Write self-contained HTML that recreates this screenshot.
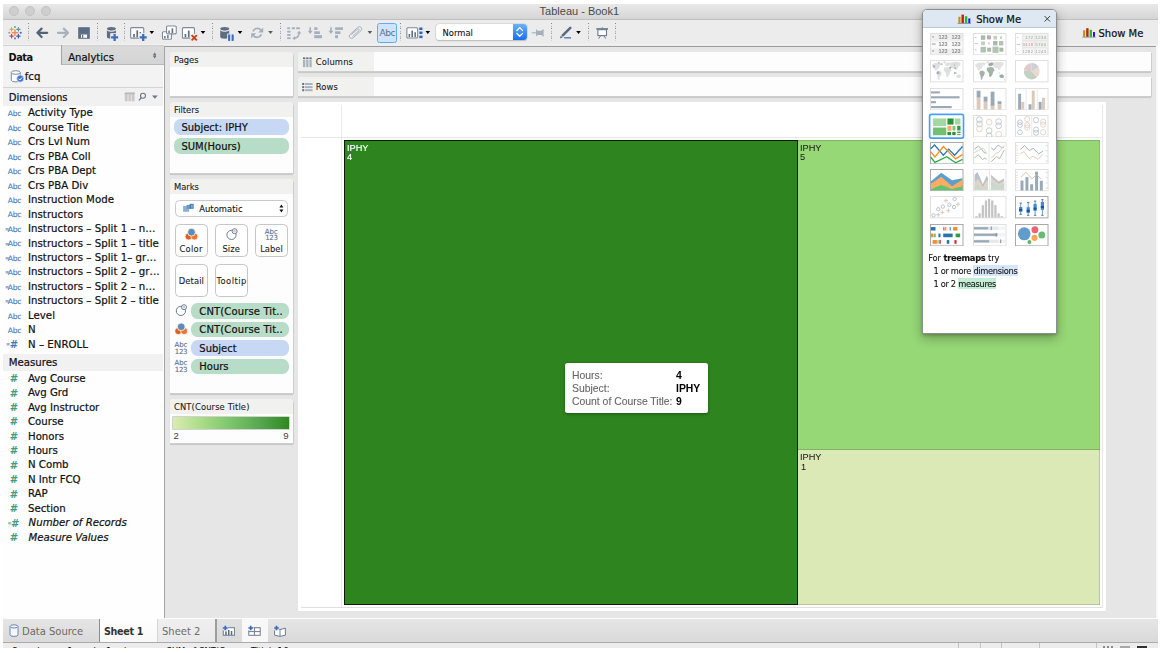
<!DOCTYPE html><html lang="en"><head><meta charset="utf-8"><title>Tableau - Book1</title><style>
*{box-sizing:border-box;margin:0;padding:0}
html,body{width:1162px;height:653px;overflow:hidden;background:#fff}
body{position:relative;font-family:"DejaVu Sans Condensed","DejaVu Sans","Liberation Sans",sans-serif;font-size:11.3px;color:#111}
.a{position:absolute}
.t{position:absolute;white-space:pre;line-height:1;-webkit-text-stroke:0.22px currentColor}
.ui{font-family:"DejaVu Sans Condensed","DejaVu Sans","Liberation Sans",sans-serif;font-stretch:condensed}
.ar{font-family:"Liberation Sans","DejaVu Sans",sans-serif}
.dj{font-family:"DejaVu Sans","Liberation Sans",sans-serif}
.n{-webkit-text-stroke:0}
.g{will-change:transform}
.s{-webkit-text-stroke:0.1px currentColor}
#win{left:3px;top:4px;width:1155px;height:644px;background:#e6e6e6;overflow:hidden}
#abs{left:-3px;top:-4px;width:1162px;height:653px}
.tl{width:10.4px;height:10.4px;border-radius:50%;background:#cecece;border:1px solid #c2c2c2}
.sep{width:1px;height:18px;top:23px;background-image:linear-gradient(#828282 1.1px,rgba(0,0,0,0) 1.1px,rgba(0,0,0,0) 2.45px,#aaa 2.45px,#aaa 3.5px,rgba(0,0,0,0) 3.5px);background-size:1px 4.9px}
.card{background:#fdfdfd;border-radius:4px 4px 0 0;box-shadow:1px 1px 0 #cdcdcd,0 1.6px 0.8px #c6c6c6}
.ch{position:absolute;left:0;top:0;right:0;background:#f1f1f0;border-radius:4px 4px 0 0}
.pill{border-radius:6.5px}
.blue{background:#c6d8f3}
.green{background:#b7ddc8}
.btn{background:#fff;border:1.5px solid #c6c6c6;border-radius:4.5px}
</style></head><body>
<div id="win" class="a"><div id="abs" class="a">
<div class="a" style="left:3.00px;top:4.00px;width:1155.00px;height:16.00px;background:linear-gradient(#e9e9e9,#d5d5d5);border-bottom:1px solid #c0c0c0"></div>
<div class="a tl" style="left:8.90px;top:5.70px;width:10.40px;height:10.40px;"></div>
<div class="a tl" style="left:24.90px;top:5.70px;width:10.40px;height:10.40px;"></div>
<div class="a tl" style="left:40.90px;top:5.70px;width:10.40px;height:10.40px;"></div>
<div class="t ar n" style="left:539.60px;top:6px;font-size:11px;color:#4a4a4a;">Tableau - Book1</div>
<div class="a" style="left:3.00px;top:20.00px;width:1155.00px;height:26.00px;background:#ececec"></div>
<div class="a" style="left:3.00px;top:44.20px;width:1155.00px;height:1.00px;background:#f1f1f1"></div>
<div class="a" style="left:3.00px;top:45.20px;width:58.50px;height:1.30px;background:#d3d3d3"></div>
<div class="a" style="left:163.40px;top:46.00px;width:995.00px;height:1.00px;background:#9c9c9c"></div>
<div class="a sep" style="left:27.80px;top:23.20px;width:1.00px;height:18.00px;"></div>
<div class="a sep" style="left:96.70px;top:23.20px;width:1.00px;height:18.00px;"></div>
<div class="a sep" style="left:123.90px;top:23.20px;width:1.00px;height:18.00px;"></div>
<div class="a sep" style="left:212.20px;top:23.20px;width:1.00px;height:18.00px;"></div>
<div class="a sep" style="left:279.60px;top:23.20px;width:1.00px;height:18.00px;"></div>
<div class="a sep" style="left:400.00px;top:23.20px;width:1.00px;height:18.00px;"></div>
<div class="a sep" style="left:550.70px;top:23.20px;width:1.00px;height:18.00px;"></div>
<div class="a sep" style="left:587.50px;top:23.20px;width:1.00px;height:18.00px;"></div>
<div class="a sep" style="left:614.90px;top:23.20px;width:1.00px;height:18.00px;"></div>
<svg class="a" style="left:0;top:0;overflow:visible" width="1162" height="653" viewBox="0 0 1162 653">
<path d="M12.40 32.70h5.20M15.00 30.10v5.20" stroke="#ef8f57" stroke-width="1.50" stroke-linecap="round" fill="none"/>
<path d="M9.90 29.30h3.40M11.60 27.60v3.40" stroke="#f0a146" stroke-width="1.20" stroke-linecap="round" fill="none"/>
<path d="M16.70 29.30h3.40M18.40 27.60v3.40" stroke="#5b98a6" stroke-width="1.20" stroke-linecap="round" fill="none"/>
<path d="M9.90 36.10h3.40M11.60 34.40v3.40" stroke="#d93a5e" stroke-width="1.20" stroke-linecap="round" fill="none"/>
<path d="M16.70 36.10h3.40M18.40 34.40v3.40" stroke="#3a5d9f" stroke-width="1.20" stroke-linecap="round" fill="none"/>
<circle cx="15.00" cy="27.00" r="1.05" fill="#6aa1a8"/>
<circle cx="9.30" cy="32.70" r="1.05" fill="#80abb2"/>
<circle cx="20.70" cy="32.70" r="1.05" fill="#5761a3"/>
<circle cx="15.00" cy="38.40" r="1.05" fill="#7a83bb"/>
<path d="M47.2 32.8H38.2M41.6 28.6L37.4 32.8L41.6 37" fill="none" stroke="#526277" stroke-width="2.2" stroke-linecap="round" stroke-linejoin="round"/>
<path d="M58 32.8H67M63.8 28.6L68 32.8L63.8 37" fill="none" stroke="#a9b1bd" stroke-width="2.2" stroke-linecap="round" stroke-linejoin="round"/>
<rect x="78.2" y="27.2" width="11.6" height="11.6" fill="#5c6c83"/><rect x="81" y="34.5" width="6.1" height="3.3" fill="#fff"/><rect x="82" y="35" width="1.3" height="2.8" fill="#5c6c83"/><rect x="78.2" y="33.6" width="11.6" height="0.6" fill="#7a889b"/>
<path d="M106.90 29.80v7.00a4.50 1.90 0 0 0 9.00 0v-7.00a4.50 1.71 0 0 1 -9.00 0z" fill="#5e6d81"/><ellipse cx="111.40" cy="28.80" rx="4.50" ry="1.90" fill="#5e6d81"/><path d="M106.90 29.40a4.50 1.90 0 0 0 9.00 0" fill="none" stroke="#eef0f2" stroke-width="0.7"/>
<path d="M110.2 33.2h8.6v8.4h-8.6z" fill="#ececec"/>
<path d="M113.45 33.90h2.30v2.35h2.35v2.30h-2.35v2.35h-2.30v-2.35h-2.35v-2.30h2.35z" fill="#3d6cc0"/>
<rect x="130.65" y="27.65" width="13.10" height="10.50" rx="1" fill="#fff" stroke="#7d8a9b" stroke-width="1.10"/><rect x="133.20" y="34.00" width="1.70" height="3.30" fill="#5e6d81"/><rect x="136.40" y="30.40" width="1.70" height="6.90" fill="#5e6d81"/><rect x="139.60" y="32.00" width="1.50" height="5.30" fill="#5e6d81"/>
<path d="M138.8 33.2h8.6v8.4h-8.6z" fill="#ececec"/>
<path d="M142.05 33.90h2.30v2.35h2.35v2.30h-2.35v2.35h-2.30v-2.35h-2.35v-2.30h2.35z" fill="#3d6cc0"/>
<path d="M149.50 31.10h4.60l-2.30 2.90z" fill="#000"/>
<rect x="162.45" y="31.75" width="9.00" height="7.50" rx="1" fill="#fff" stroke="#7d8a9b" stroke-width="1.10"/><rect x="164.20" y="36.00" width="1.40" height="2.40" fill="#5e6d81"/><rect x="167.20" y="35.00" width="1.40" height="3.40" fill="#5e6d81"/>
<rect x="166.55" y="25.95" width="9.70" height="7.90" rx="1" fill="#fff" stroke="#7d8a9b" stroke-width="1.10"/><rect x="168.40" y="30.50" width="1.40" height="2.50" fill="#5e6d81"/><rect x="171.60" y="28.40" width="1.60" height="4.60" fill="#5e6d81"/>
<rect x="182.45" y="27.65" width="12.00" height="10.50" rx="1" fill="#fff" stroke="#7d8a9b" stroke-width="1.10"/><rect x="184.60" y="34.00" width="1.70" height="3.30" fill="#5e6d81"/><rect x="187.90" y="30.60" width="1.70" height="6.70" fill="#5e6d81"/>
<path d="M190.2 33.8h8v8h-8z" fill="#ececec"/>
<path d="M191.6 35.2l5.2 5.2M196.8 35.2l-5.2 5.2" stroke="#c6401c" stroke-width="1.9" fill="none"/>
<path d="M200.70 31.10h4.60l-2.30 2.90z" fill="#000"/>
<path d="M220.20 29.80v7.00a4.50 1.90 0 0 0 9.00 0v-7.00a4.50 1.71 0 0 1 -9.00 0z" fill="#5e6d81"/><ellipse cx="224.70" cy="28.80" rx="4.50" ry="1.90" fill="#5e6d81"/><path d="M220.20 29.40a4.50 1.90 0 0 0 9.00 0" fill="none" stroke="#eef0f2" stroke-width="0.7"/>
<path d="M227.2 33.6h7.4v8h-7.4z" fill="#ececec"/>
<rect x="228.1" y="34.5" width="2.1" height="6.4" fill="#3a6cc1"/><rect x="231.6" y="34.5" width="2.1" height="6.4" fill="#3a6cc1"/>
<path d="M237.70 31.10h4.60l-2.30 2.90z" fill="#000"/>
<path d="M253 31.4A4.7 4.7 0 0 1 261 30.2" fill="none" stroke="#a5afbc" stroke-width="1.7"/><path d="M263.2 27.6v5h-5z" fill="#a5afbc"/>
<path d="M261.4 34.4A4.7 4.7 0 0 1 253.4 35.6" fill="none" stroke="#a5afbc" stroke-width="1.7"/><path d="M251.2 38.2v-5h5z" fill="#a5afbc"/>
<path d="M268.20 31.10h4.60l-2.30 2.90z" fill="#5a5a5a"/>
<rect x="287.20" y="27.3" width="2.70" height="1.9" fill="#a5afbc"/>
<rect x="291.80" y="27.3" width="3.20" height="1.9" fill="#a5afbc"/>
<rect x="296.20" y="27.3" width="3.70" height="1.9" fill="#a5afbc"/>
<rect x="287.2" y="30.80" width="3.4" height="1.8" fill="#a5afbc"/>
<rect x="287.2" y="34.10" width="3.4" height="1.8" fill="#a5afbc"/>
<rect x="287.2" y="37.30" width="3.4" height="1.8" fill="#a5afbc"/>
<path d="M294 38.2Q299 37.6 299.2 32.6" fill="none" stroke="#a5afbc" stroke-width="1.5"/><path d="M296.8 33.4l2.4-2.6 2.2 2.8z" fill="#a5afbc"/><path d="M295 36.2l-2.7 2.1 2.9 2z" fill="#a5afbc"/>
<path d="M310.20 27.3v4.2" stroke="#a5afbc" stroke-width="1.6" fill="none"/><path d="M307.70 30.8h5l-2.5 3.2z" fill="#a5afbc"/><rect x="314.20" y="27.30" width="3.30" height="2.60" fill="#a5afbc"/><rect x="314.20" y="31.30" width="5.70" height="2.70" fill="#a5afbc"/><rect x="314.20" y="35.20" width="7.80" height="3.00" fill="#a5afbc"/>
<path d="M331.00 27.3v4.2" stroke="#a5afbc" stroke-width="1.6" fill="none"/><path d="M328.50 30.8h5l-2.5 3.2z" fill="#a5afbc"/><rect x="335.10" y="27.30" width="7.90" height="2.60" fill="#a5afbc"/><rect x="335.10" y="31.30" width="5.30" height="2.70" fill="#a5afbc"/><rect x="335.10" y="35.20" width="2.90" height="3.00" fill="#a5afbc"/>
<g transform="translate(355.5 32.6) rotate(-42)"><rect x="-7.6" y="-2.3" width="15.2" height="4.6" rx="2.3" fill="none" stroke="#a5afbc" stroke-width="0.9"/><path d="M-4.6 0.9h8.6a1.2 1.2 0 0 0 0-2.2h-8.2" fill="none" stroke="#a5afbc" stroke-width="0.9"/></g>
<path d="M367.60 31.10h4.60l-2.30 2.90z" fill="#5a5a5a"/>
<rect x="406.85" y="27.75" width="10.80" height="10.20" rx="1" fill="#fff" stroke="#7d8a9b" stroke-width="1.10"/><rect x="408.60" y="34.00" width="1.50" height="3.10" fill="#5e6d81"/><rect x="411.40" y="30.60" width="1.60" height="6.50" fill="#5e6d81"/><rect x="414.40" y="32.20" width="1.50" height="4.90" fill="#5e6d81"/>
<rect x="419.3" y="27.50" width="3.2" height="2.5" fill="#3565b8"/>
<rect x="419.3" y="31.50" width="3.2" height="2.5" fill="#3565b8"/>
<rect x="419.3" y="35.60" width="3.2" height="2.5" fill="#3565b8"/>
<path d="M425.50 31.10h4.60l-2.30 2.90z" fill="#000"/>
<path d="M531.8 32.8h4.6" stroke="#a5afbc" stroke-width="1.1" fill="none"/><path d="M536 29v7.6l1.6-1.6h3.6l2.4 1.8V28.9l-2.4 1.8h-3.6z" fill="#a5afbc"/>
<path d="M562.8 35.4L570.3 27.9" stroke="#5a6a80" stroke-width="2.6" stroke-linecap="round" fill="none"/><path d="M559.8 38.4l1-2.6 1.8 1.8z" fill="#5a6a80"/><path d="M564.2 37.8h6.8" stroke="#4a70c2" stroke-width="1.3" fill="none"/>
<path d="M576.20 31.10h4.60l-2.30 2.90z" fill="#000"/>
<rect x="596.3" y="28.1" width="11.7" height="1.6" fill="#6b7b90"/><rect x="597.9" y="29.7" width="8.6" height="5.9" fill="#fff" stroke="#6b7b90" stroke-width="1.1"/><path d="M600.4 36l-1.8 2.6M604 36l1.8 2.6M602.2 27.2v1" stroke="#6b7b90" stroke-width="1" fill="none"/>
<rect x="1083.10" y="30.30" width="2.10" height="6.60" fill="#cf8a08"/><rect x="1086.20" y="28.20" width="2.40" height="8.70" fill="#b8240a"/><rect x="1089.60" y="29.80" width="2.40" height="7.10" fill="#1fbf2a"/><rect x="1093.00" y="32.00" width="2.00" height="4.90" fill="#2a12f5"/><path d="M1082.30 37.20h13.40" stroke="#6a7f9c" stroke-width="0.7" fill="none"/>
</svg>
<div class="a" style="left:377.40px;top:23.10px;width:19.60px;height:19.60px;background:#cfe4fa;border:1.3px solid #5eacf6;border-radius:2.5px"></div>
<div class="t dj n" style="left:379.40px;top:29px;font-size:9.1px;color:#5f7189;letter-spacing:-0.4px">Abc</div>
<div class="a" style="left:435.80px;top:24.40px;width:91.00px;height:15.80px;background:#fff;border-radius:3.5px;box-shadow:0 0 0 0.6px #cfcfcf,0 0.8px 1px rgba(0,0,0,.28);overflow:hidden"><div class="a" style="right:0;top:0;width:13.6px;height:100%;background:linear-gradient(#6db2f9,#1b6df1)"></div></div>
<div class="t ui s" style="left:442.60px;top:28px;font-size:9.3px;color:#111;">Normal</div>
<svg class="a" style="left:0;top:0;overflow:visible" width="1162" height="653" viewBox="0 0 1162 653"><path d="M516.9 30.5l2.8-2.9 2.8 2.9M516.9 33.4l2.8 2.9 2.8-2.9" fill="none" stroke="#fff" stroke-width="1.25" stroke-linecap="round" stroke-linejoin="round"/></svg>
<div class="t ui" style="left:1098.50px;top:28px;font-size:11.1px;color:#111;">Show Me</div>
<div class="a" style="left:3.00px;top:46.00px;width:161.00px;height:571.60px;background:#fefefe"></div>
<div class="a" style="left:3.00px;top:46.00px;width:160.40px;height:41.40px;background:#f3f3f3"></div>
<div class="a" style="left:61.00px;top:45.20px;width:102.90px;height:19.60px;background:linear-gradient(#cfcfcf,#dadada 12%,#d4d4d4);border-left:1.1px solid #a4a4a4;border-bottom:1px solid #b9b9b9"></div>
<div class="t ui n" style="left:8.40px;top:53px;font-size:10.9px;color:#111;font-weight:bold;letter-spacing:-0.4px">Data</div>
<div class="t ui" style="left:68.20px;top:52px;font-size:11.2px;color:#111;">Analytics</div>
<div class="a" style="left:3.00px;top:87.00px;width:160.40px;height:1.00px;background:#d3d3d3"></div>
<div class="t ui" style="left:24.80px;top:71px;font-size:11.3px;color:#111;">fcq</div>
<div class="a" style="left:3.00px;top:88.00px;width:160.40px;height:17.80px;background:#f1f1f1"></div>
<div class="t ui" style="left:8.80px;top:92px;font-size:11.2px;color:#111;">Dimensions</div>
<div class="t dj s" style="left:7.80px;top:110px;font-size:7.6px;color:#4b76bb;letter-spacing:-0.3px">Abc</div>
<div class="t ui" style="left:28.00px;top:107px;font-size:11.3px;color:#111;letter-spacing:0.04px">Activity Type</div>
<div class="t dj s" style="left:7.80px;top:125px;font-size:7.6px;color:#4b76bb;letter-spacing:-0.3px">Abc</div>
<div class="t ui" style="left:28.00px;top:122px;font-size:11.3px;color:#111;letter-spacing:0.04px">Course Title</div>
<div class="t dj s" style="left:7.80px;top:139px;font-size:7.6px;color:#4b76bb;letter-spacing:-0.3px">Abc</div>
<div class="t ui" style="left:28.00px;top:136px;font-size:11.3px;color:#111;letter-spacing:0.04px">Crs Lvl Num</div>
<div class="t dj s" style="left:7.80px;top:154px;font-size:7.6px;color:#4b76bb;letter-spacing:-0.3px">Abc</div>
<div class="t ui" style="left:28.00px;top:151px;font-size:11.3px;color:#111;letter-spacing:0.04px">Crs PBA Coll</div>
<div class="t dj s" style="left:7.80px;top:168px;font-size:7.6px;color:#4b76bb;letter-spacing:-0.3px">Abc</div>
<div class="t ui" style="left:28.00px;top:165px;font-size:11.3px;color:#111;letter-spacing:0.04px">Crs PBA Dept</div>
<div class="t dj s" style="left:7.80px;top:183px;font-size:7.6px;color:#4b76bb;letter-spacing:-0.3px">Abc</div>
<div class="t ui" style="left:28.00px;top:180px;font-size:11.3px;color:#111;letter-spacing:0.04px">Crs PBA Div</div>
<div class="t dj s" style="left:7.80px;top:197px;font-size:7.6px;color:#4b76bb;letter-spacing:-0.3px">Abc</div>
<div class="t ui" style="left:28.00px;top:194px;font-size:11.3px;color:#111;letter-spacing:0.04px">Instruction Mode</div>
<div class="t dj s" style="left:7.80px;top:211px;font-size:7.6px;color:#4b76bb;letter-spacing:-0.3px">Abc</div>
<div class="t ui" style="left:28.00px;top:209px;font-size:11.3px;color:#111;letter-spacing:0.04px">Instructors</div>
<div class="t dj n" style="left:5.00px;top:227px;font-size:5px;color:#4b76bb;font-weight:bold;">=</div>
<div class="t dj s" style="left:7.80px;top:226px;font-size:7.6px;color:#4b76bb;letter-spacing:-0.3px">Abc</div>
<div class="t ui" style="left:28.00px;top:223px;font-size:11.3px;color:#111;letter-spacing:0.04px">Instructors – Split 1 – n…</div>
<div class="t dj n" style="left:5.00px;top:242px;font-size:5px;color:#4b76bb;font-weight:bold;">=</div>
<div class="t dj s" style="left:7.80px;top:240px;font-size:7.6px;color:#4b76bb;letter-spacing:-0.3px">Abc</div>
<div class="t ui" style="left:28.00px;top:238px;font-size:11.3px;color:#111;letter-spacing:0.04px">Instructors – Split 1 – title</div>
<div class="t dj n" style="left:5.00px;top:256px;font-size:5px;color:#4b76bb;font-weight:bold;">=</div>
<div class="t dj s" style="left:7.80px;top:255px;font-size:7.6px;color:#4b76bb;letter-spacing:-0.3px">Abc</div>
<div class="t ui" style="left:28.00px;top:252px;font-size:11.3px;color:#111;letter-spacing:0.04px">Instructors – Split 1– gr…</div>
<div class="t dj n" style="left:5.00px;top:270px;font-size:5px;color:#4b76bb;font-weight:bold;">=</div>
<div class="t dj s" style="left:7.80px;top:269px;font-size:7.6px;color:#4b76bb;letter-spacing:-0.3px">Abc</div>
<div class="t ui" style="left:28.00px;top:266px;font-size:11.3px;color:#111;letter-spacing:0.04px">Instructors – Split 2 – gr…</div>
<div class="t dj n" style="left:5.00px;top:285px;font-size:5px;color:#4b76bb;font-weight:bold;">=</div>
<div class="t dj s" style="left:7.80px;top:284px;font-size:7.6px;color:#4b76bb;letter-spacing:-0.3px">Abc</div>
<div class="t ui" style="left:28.00px;top:281px;font-size:11.3px;color:#111;letter-spacing:0.04px">Instructors – Split 2 – n…</div>
<div class="t dj n" style="left:5.00px;top:299px;font-size:5px;color:#4b76bb;font-weight:bold;">=</div>
<div class="t dj s" style="left:7.80px;top:298px;font-size:7.6px;color:#4b76bb;letter-spacing:-0.3px">Abc</div>
<div class="t ui" style="left:28.00px;top:295px;font-size:11.3px;color:#111;letter-spacing:0.04px">Instructors – Split 2 – title</div>
<div class="t dj s" style="left:7.80px;top:313px;font-size:7.6px;color:#4b76bb;letter-spacing:-0.3px">Abc</div>
<div class="t ui" style="left:28.00px;top:310px;font-size:11.3px;color:#111;letter-spacing:0.04px">Level</div>
<div class="t dj s" style="left:7.80px;top:327px;font-size:7.6px;color:#4b76bb;letter-spacing:-0.3px">Abc</div>
<div class="t ui" style="left:28.00px;top:324px;font-size:11.3px;color:#111;letter-spacing:0.04px">N</div>
<div class="t dj n" style="left:6.00px;top:342px;font-size:5px;color:#4b76bb;font-weight:bold;">=</div>
<div class="t dj n" style="left:9.80px;top:340px;font-size:10px;color:#4b76bb;font-weight:bold;letter-spacing:0">#</div>
<div class="t ui" style="left:28.00px;top:339px;font-size:11.3px;color:#111;letter-spacing:0.04px">N – ENROLL</div>
<div class="a" style="left:3.00px;top:353.80px;width:160.40px;height:17.40px;background:#f1f1f1"></div>
<div class="t ui" style="left:8.80px;top:357px;font-size:11.3px;color:#111;">Measures</div>
<div class="t dj n" style="left:9.80px;top:374px;font-size:10px;color:#3f9c82;font-weight:bold;">#</div>
<div class="t ui" style="left:28.00px;top:373px;font-size:11.3px;color:#111;">Avg Course</div>
<div class="t dj n" style="left:9.80px;top:389px;font-size:10px;color:#3f9c82;font-weight:bold;">#</div>
<div class="t ui" style="left:28.00px;top:387px;font-size:11.3px;color:#111;">Avg Grd</div>
<div class="t dj n" style="left:9.80px;top:403px;font-size:10px;color:#3f9c82;font-weight:bold;">#</div>
<div class="t ui" style="left:28.00px;top:402px;font-size:11.3px;color:#111;">Avg Instructor</div>
<div class="t dj n" style="left:9.80px;top:417px;font-size:10px;color:#3f9c82;font-weight:bold;">#</div>
<div class="t ui" style="left:28.00px;top:416px;font-size:11.3px;color:#111;">Course</div>
<div class="t dj n" style="left:9.80px;top:432px;font-size:10px;color:#3f9c82;font-weight:bold;">#</div>
<div class="t ui" style="left:28.00px;top:431px;font-size:11.3px;color:#111;">Honors</div>
<div class="t dj n" style="left:9.80px;top:446px;font-size:10px;color:#3f9c82;font-weight:bold;">#</div>
<div class="t ui" style="left:28.00px;top:445px;font-size:11.3px;color:#111;">Hours</div>
<div class="t dj n" style="left:9.80px;top:461px;font-size:10px;color:#3f9c82;font-weight:bold;">#</div>
<div class="t ui" style="left:28.00px;top:459px;font-size:11.3px;color:#111;">N Comb</div>
<div class="t dj n" style="left:9.80px;top:475px;font-size:10px;color:#3f9c82;font-weight:bold;">#</div>
<div class="t ui" style="left:28.00px;top:474px;font-size:11.3px;color:#111;">N Intr FCQ</div>
<div class="t dj n" style="left:9.80px;top:490px;font-size:10px;color:#3f9c82;font-weight:bold;">#</div>
<div class="t ui" style="left:28.00px;top:488px;font-size:11.3px;color:#111;">RAP</div>
<div class="t dj n" style="left:9.80px;top:504px;font-size:10px;color:#3f9c82;font-weight:bold;">#</div>
<div class="t ui" style="left:28.00px;top:503px;font-size:11.3px;color:#111;">Section</div>
<div class="t dj n" style="left:7.60px;top:521px;font-size:5px;color:#3f9c82;font-weight:bold;">=</div>
<div class="t dj n" style="left:11.00px;top:519px;font-size:10px;color:#3f9c82;font-weight:bold;">#</div>
<div class="t ui" style="left:28.60px;top:517px;font-size:11.3px;color:#111;font-style:italic;">Number of Records</div>
<div class="t dj n" style="left:9.80px;top:533px;font-size:10px;color:#3f9c82;font-weight:bold;">#</div>
<div class="t ui" style="left:28.60px;top:532px;font-size:11.3px;color:#111;font-style:italic;">Measure Values</div>
<div class="a" style="left:163.90px;top:46.00px;width:1.30px;height:571.60px;background:#a4a4a4"></div>
<div class="a card" style="left:170.00px;top:52.40px;width:123.00px;height:43.60px;"><div class="ch" style="height:14.6px"></div></div>
<div class="t ui s" style="left:174.00px;top:55px;font-size:9.3px;color:#1c1c1c;letter-spacing:0px">Pages</div>
<div class="a card" style="left:170.00px;top:102.20px;width:123.00px;height:70.90px;"><div class="ch" style="height:14.6px"></div></div>
<div class="t ui s" style="left:174.00px;top:105px;font-size:9.3px;color:#1c1c1c;letter-spacing:0px">Filters</div>
<div class="a card" style="left:170.00px;top:179.40px;width:123.00px;height:213.40px;"><div class="ch" style="height:14.6px"></div></div>
<div class="t ui s" style="left:174.00px;top:182px;font-size:9.3px;color:#1c1c1c;letter-spacing:0px">Marks</div>
<div class="a card" style="left:170.00px;top:399.20px;width:123.00px;height:43.80px;"><div class="ch" style="height:14.6px"></div></div>
<div class="t ui s" style="left:174.00px;top:402px;font-size:9.3px;color:#1c1c1c;letter-spacing:0.12px">CNT(Course Title)</div>
<div class="a pill blue" style="left:174.00px;top:119.30px;width:115.00px;height:16.00px;"></div>
<div class="t ui" style="left:181.40px;top:122px;font-size:11.1px;color:#111;letter-spacing:0px">Subject: IPHY</div>
<div class="a pill green" style="left:174.00px;top:138.00px;width:115.00px;height:15.90px;"></div>
<div class="t ui" style="left:181.40px;top:141px;font-size:11.1px;color:#111;letter-spacing:0px">SUM(Hours)</div>
<div class="a" style="left:174.80px;top:200.10px;width:113.70px;height:17.00px;background:#fff;border:1.5px solid #c9c9c9;border-radius:4.5px"></div>
<div class="t ui s" style="left:199.20px;top:204px;font-size:9.3px;color:#111;letter-spacing:0.05px">Automatic</div>
<div class="a btn" style="left:174.90px;top:224.20px;width:33.30px;height:33.30px;"></div>
<div class="t ui s" style="left:179.40px;top:244px;font-size:9.3px;color:#222;letter-spacing:0.3px">Color</div>
<div class="a btn" style="left:215.10px;top:224.20px;width:33.30px;height:33.30px;"></div>
<div class="t ui s" style="left:222.40px;top:244px;font-size:9.3px;color:#222;letter-spacing:0.15px">Size</div>
<div class="a btn" style="left:255.10px;top:224.20px;width:33.30px;height:33.30px;"></div>
<div class="t ui s" style="left:260.20px;top:244px;font-size:9.3px;color:#222;letter-spacing:0px">Label</div>
<div class="a btn" style="left:174.90px;top:264.10px;width:33.30px;height:33.30px;"></div>
<div class="t ui s" style="left:178.80px;top:276px;font-size:9.3px;color:#222;letter-spacing:0.1px">Detail</div>
<div class="a btn" style="left:215.10px;top:264.10px;width:33.30px;height:33.30px;"></div>
<div class="t ui s" style="left:216.40px;top:276px;font-size:9.3px;color:#222;letter-spacing:0.5px">Tooltip</div>
<div class="t dj s" style="left:264.80px;top:229px;font-size:7px;color:#5b7192;letter-spacing:-0.2px">Abc</div>
<div class="t dj s" style="left:265.20px;top:235px;font-size:7px;color:#5b7192;letter-spacing:-0.3px">123</div>
<div class="a pill green" style="left:191.40px;top:303.20px;width:97.40px;height:15.70px;"></div>
<div class="t ui" style="left:199.30px;top:306px;font-size:11.1px;color:#111;letter-spacing:0.15px">CNT(Course Tit..</div>
<div class="a pill green" style="left:191.40px;top:321.70px;width:97.40px;height:15.70px;"></div>
<div class="t ui" style="left:199.30px;top:324px;font-size:11.1px;color:#111;letter-spacing:0.15px">CNT(Course Tit..</div>
<div class="a pill blue" style="left:191.40px;top:340.20px;width:97.40px;height:15.70px;"></div>
<div class="t ui" style="left:199.30px;top:343px;font-size:11.1px;color:#111;letter-spacing:0px">Subject</div>
<div class="a pill green" style="left:191.40px;top:358.70px;width:97.40px;height:15.70px;"></div>
<div class="t ui" style="left:199.30px;top:361px;font-size:11.1px;color:#111;letter-spacing:0px">Hours</div>
<div class="t dj s" style="left:174.60px;top:342px;font-size:7px;color:#5b7192;letter-spacing:-0.2px">Abc</div>
<div class="t dj s" style="left:174.80px;top:349px;font-size:7px;color:#5b7192;letter-spacing:-0.3px">123</div>
<div class="t dj s" style="left:174.60px;top:360px;font-size:7px;color:#5b7192;letter-spacing:-0.2px">Abc</div>
<div class="t dj s" style="left:174.80px;top:367px;font-size:7px;color:#5b7192;letter-spacing:-0.3px">123</div>
<svg class="a" style="left:0;top:0;overflow:visible" width="1162" height="653" viewBox="0 0 1162 653">
<rect x="183.1" y="205.9" width="6.1" height="5.9" fill="#8fb1d0"/><rect x="186.6" y="204.9" width="4" height="4" fill="#6c97c2"/><rect x="189.6" y="203.8" width="4.1" height="5" fill="#4a7eb2"/><rect x="191" y="204.8" width="1.8" height="3" fill="#7ea5cc"/>
<path d="M279.4 207.5h4l-2-2.9zM279.4 209.6h4l-2 2.9z" fill="#111"/>
<circle cx="188.60" cy="236.50" r="3.5" fill="#e1601d" stroke="#fff" stroke-width="0.7"/><circle cx="194.40" cy="236.50" r="3.5" fill="#f0742a" stroke="#fff" stroke-width="0.7"/><circle cx="191.50" cy="232.20" r="3.9" fill="#5c8cb7" stroke="#fff" stroke-width="0.8"/>
<circle cx="231.50" cy="234.90" r="4.6" fill="#fff" stroke="#5d6d86" stroke-width="0.9"/><circle cx="234.60" cy="231.20" r="2.5" fill="#fff" stroke="#5d6d86" stroke-width="0.9"/><circle cx="234.60" cy="231.20" r="0.9" fill="none" stroke="#8d9ab0" stroke-width="0.6"/>
<circle cx="180.90" cy="310.90" r="4.6" fill="#fff" stroke="#5d6d86" stroke-width="0.9"/><circle cx="184.00" cy="307.20" r="2.5" fill="#fff" stroke="#5d6d86" stroke-width="0.9"/><circle cx="184.00" cy="307.20" r="0.9" fill="none" stroke="#8d9ab0" stroke-width="0.6"/>
<circle cx="178.30" cy="331.10" r="3.5" fill="#e1601d" stroke="#fff" stroke-width="0.7"/><circle cx="184.10" cy="331.10" r="3.5" fill="#f0742a" stroke="#fff" stroke-width="0.7"/><circle cx="181.20" cy="326.80" r="3.9" fill="#5c8cb7" stroke="#fff" stroke-width="0.8"/>
</svg>
<div class="a" style="left:173.40px;top:417.30px;width:115.40px;height:11.80px;background:linear-gradient(90deg,#d9ecb2,#a9dc87 25%,#7cc56a 50%,#56a750 75%,#2e8a1f);box-shadow:0 0 0 0.6px #b4b4b4"></div>
<div class="t ar n" style="left:173.60px;top:431px;font-size:9.6px;color:#444;">2</div>
<div class="t ar n" style="left:283.20px;top:431px;font-size:9.6px;color:#444;">9</div>
<div class="a card" style="left:298.00px;top:52.40px;width:852.80px;height:18.80px;border-radius:4px 0 0 0"><div class="a" style="left:0;top:0;width:75.6px;height:100%;background:#f1f1f0;border-radius:4px 0 0 0"></div></div>
<div class="t ui s" style="left:315.80px;top:57px;font-size:9.3px;color:#1c1c1c;letter-spacing:0.12px">Columns</div>
<div class="a card" style="left:298.00px;top:77.40px;width:852.80px;height:18.80px;border-radius:4px 0 0 0"><div class="a" style="left:0;top:0;width:75.6px;height:100%;background:#f1f1f0;border-radius:4px 0 0 0"></div></div>
<div class="t ui s" style="left:315.80px;top:82px;font-size:9.3px;color:#1c1c1c;letter-spacing:0.12px">Rows</div>
<svg class="a" style="left:0;top:0;overflow:visible" width="1162" height="653" viewBox="0 0 1162 653"><rect x="303.0" y="57.4" width="2.3" height="1.8" fill="#5f6f85"/><rect x="303.0" y="60" width="2.3" height="7.2" fill="#a9b3c0"/><rect x="306.2" y="57.4" width="2.3" height="1.8" fill="#5f6f85"/><rect x="306.2" y="60" width="2.3" height="7.2" fill="#a9b3c0"/><rect x="309.4" y="57.4" width="2.3" height="1.8" fill="#5f6f85"/><rect x="309.4" y="60" width="2.3" height="7.2" fill="#a9b3c0"/><rect x="302.2" y="83.0" width="2" height="2" fill="#5f6f85"/><rect x="305" y="83.0" width="7.6" height="2" fill="#a9b3c0"/><rect x="302.2" y="86.1" width="2" height="2" fill="#5f6f85"/><rect x="305" y="86.1" width="7.6" height="2" fill="#a9b3c0"/><rect x="302.2" y="89.2" width="2" height="2" fill="#5f6f85"/><rect x="305" y="89.2" width="7.6" height="2" fill="#a9b3c0"/></svg>
<div class="a" style="left:298.00px;top:102.20px;width:807.80px;height:508.80px;background:#fff"></div>
<div class="a" style="left:341.30px;top:105.30px;width:1.00px;height:502.50px;background:#ebebeb"></div>
<div class="a" style="left:1102.00px;top:105.30px;width:1.00px;height:502.50px;background:#e8e8e8"></div>
<div class="a" style="left:301.40px;top:136.80px;width:801.60px;height:1.00px;background:#e8e8e8"></div>
<div class="a" style="left:301.40px;top:607.40px;width:801.60px;height:1.00px;background:#e0e0e0"></div>
<div class="a" style="left:798.20px;top:140.30px;width:301.50px;height:310.00px;background:#96d776"></div>
<div class="a" style="left:798.20px;top:449.80px;width:301.50px;height:154.80px;background:#dbe9b6"></div>
<div class="a" style="left:1099.20px;top:140.00px;width:1.00px;height:464.60px;background:rgba(120,120,120,.32)"></div>
<div class="a" style="left:798.20px;top:449.40px;width:301.90px;height:1.00px;background:rgba(110,140,90,.5)"></div>
<div class="a" style="left:798.20px;top:604.00px;width:301.50px;height:0.80px;background:rgba(120,130,100,.35)"></div>
<div class="a" style="left:798.20px;top:140.00px;width:301.90px;height:0.80px;background:rgba(110,140,90,.5)"></div>
<div class="a" style="left:344.10px;top:139.70px;width:454.20px;height:465.30px;background:#2e841e;border:1px solid #0b1d07"></div>
<div class="t ar s g" style="left:346.80px;top:144px;font-size:9.2px;color:#fff;-webkit-text-stroke:0.18px currentColor">IPHY</div>
<div class="t ar s g" style="left:346.60px;top:153px;font-size:9.2px;color:#fff;-webkit-text-stroke:0.18px currentColor">4</div>
<div class="t ar s g" style="left:800.30px;top:144px;font-size:9.2px;color:#1a1a1a;-webkit-text-stroke:0.04px currentColor">IPHY</div>
<div class="t ar s g" style="left:800.20px;top:153px;font-size:9.2px;color:#1a1a1a;-webkit-text-stroke:0.04px currentColor">5</div>
<div class="t ar s g" style="left:800.30px;top:453px;font-size:9.2px;color:#1a1a1a;-webkit-text-stroke:0.04px currentColor">IPHY</div>
<div class="t ar s g" style="left:800.60px;top:463px;font-size:9.2px;color:#1a1a1a;-webkit-text-stroke:0.04px currentColor">1</div>
<div class="a" style="left:564.70px;top:362.70px;width:143.40px;height:50.80px;background:#fff;border-radius:2.5px;box-shadow:0 1px 3px rgba(0,0,0,.35)"></div>
<div class="t ar s g" style="left:572.20px;top:371px;font-size:10.4px;color:#666;">Hours:</div>
<div class="t ar n g" style="left:676.20px;top:371px;font-size:10.4px;color:#000;font-weight:bold;">4</div>
<div class="t ar s g" style="left:572.20px;top:384px;font-size:10.4px;color:#666;">Subject:</div>
<div class="t ar n g" style="left:676.20px;top:384px;font-size:10.4px;color:#000;font-weight:bold;">IPHY</div>
<div class="t ar s g" style="left:572.20px;top:397px;font-size:10.4px;color:#666;">Count of Course Title:</div>
<div class="t ar n g" style="left:676.20px;top:397px;font-size:10.4px;color:#000;font-weight:bold;">9</div>
<div class="a" style="left:1155.80px;top:46.00px;width:2.20px;height:571.60px;background:linear-gradient(90deg,#f4f4f4,#fff)"></div>
<div class="a" style="left:3.00px;top:617.50px;width:1155.00px;height:1.00px;background:#fdfdfd"></div>
<div class="a" style="left:3.00px;top:618.60px;width:1155.00px;height:24.00px;background:linear-gradient(#e5e5e5,#d9d9d9)"></div>
<div class="a" style="left:3.00px;top:642.20px;width:1155.00px;height:1.00px;background:#ababab"></div>
<div class="a" style="left:99.00px;top:618.80px;width:58.40px;height:23.40px;background:linear-gradient(#fefefe,#f8f8f8);border-left:1px solid #8d8d8d"></div>
<div class="a" style="left:157.40px;top:618.60px;width:58.00px;height:23.60px;background:linear-gradient(#efefef,#e9e9e9);border-left:1px solid #d6d6d6"></div>
<div class="a" style="left:215.40px;top:618.80px;width:1.40px;height:23.60px;background:#9d9d9d"></div>
<div class="a" style="left:216.80px;top:618.60px;width:25.20px;height:23.60px;background:linear-gradient(#e1e1e1,#dadada)"></div>
<div class="a" style="left:242.00px;top:618.60px;width:26.00px;height:23.60px;background:#f8f8f8"></div>
<div class="t ui n" style="left:22.00px;top:626px;font-size:11.1px;color:#6a6a6a;">Data Source</div>
<div class="t ui n" style="left:104.00px;top:627px;font-size:10.7px;color:#333;font-weight:bold;letter-spacing:-0.35px">Sheet 1</div>
<div class="t ui n" style="left:162.00px;top:626px;font-size:11.1px;color:#6e6e6e;">Sheet 2</div>
<div class="a" style="left:3.00px;top:643.20px;width:1155.00px;height:4.80px;background:#ececec"></div>
<div class="a" style="left:0;top:643.2px;width:1162px;height:4.8px;overflow:hidden"><div class="a" style="left:0;top:-643.2px;width:1162px;height:660px">
<div class="t ui s" style="left:12.60px;top:646px;font-size:9.3px;color:#111;">3 marks</div>
<div class="t ui s" style="left:67.60px;top:646px;font-size:9.3px;color:#111;">1 row by 1 column</div>
<div class="t ui s" style="left:166.60px;top:646px;font-size:9.3px;color:#111;">SUM of CNT(Course Title): 16</div>
<div class="a" style="left:957.70px;top:643.20px;width:1.00px;height:5.00px;background:#c4c4c4"></div>
<div class="a" style="left:979.80px;top:643.20px;width:1.00px;height:5.00px;background:#c4c4c4"></div>
<div class="a" style="left:1001.40px;top:643.20px;width:1.00px;height:5.00px;background:#c4c4c4"></div>
<div class="a" style="left:1038.80px;top:643.20px;width:1.00px;height:5.00px;background:#c4c4c4"></div>
<div class="a" style="left:1095.50px;top:643.20px;width:1.00px;height:5.00px;background:#c4c4c4"></div>
<div class="a" style="left:1103.00px;top:645.80px;width:2.40px;height:2.40px;background:#8a8a8a"></div>
<div class="a" style="left:1107.00px;top:645.80px;width:2.40px;height:2.40px;background:#8a8a8a"></div>
<div class="a" style="left:1111.00px;top:645.80px;width:2.40px;height:2.40px;background:#8a8a8a"></div>
<div class="a" style="left:1120.00px;top:646.00px;width:10.00px;height:2.20px;background:#a8a8a8"></div>
<div class="a" style="left:1137.00px;top:646.00px;width:10.00px;height:2.20px;background:#303030"></div>
</div></div>
<svg class="a" style="left:0;top:0;overflow:visible" width="1162" height="653" viewBox="0 0 1162 653">
<path d="M10 626.6v8.2a4 1.6 0 0 0 8 0v-8.2" fill="#f6f7fa" stroke="#6c84b2" stroke-width="1"/><ellipse cx="14" cy="626.4" rx="4" ry="1.6" fill="#f6f7fa" stroke="#6c84b2" stroke-width="1"/>
<rect x="223.3" y="627.7" width="11.1" height="7.6" fill="#fff" stroke="#6c7c92" stroke-width="1"/><rect x="225.2" y="631.4" width="1.5" height="3.6" fill="#56667b"/><rect x="228" y="630" width="1.5" height="5" fill="#56667b"/><rect x="230.8" y="631" width="1.5" height="4" fill="#56667b"/><rect x="222.6" y="625.4" width="5.4" height="5" fill="#dfdfdf"/><path d="M224.45 625.70h1.70v1.45h1.45v1.70h-1.45v1.45h-1.70v-1.45h-1.45v-1.70h1.45z" fill="#3a69c2"/>
<rect x="248.8" y="627.7" width="11.4" height="7.6" fill="#fff" stroke="#6c7c92" stroke-width="1"/><path d="M254.4 627.7v7.6M248.8 631.6h11.4" stroke="#6c7c92" stroke-width="1" fill="none"/><rect x="248" y="625.4" width="5.4" height="5" fill="#f8f8f8"/><path d="M249.85 625.70h1.70v1.45h1.45v1.70h-1.45v1.45h-1.70v-1.45h-1.45v-1.70h1.45z" fill="#3a69c2"/>
<path d="M274.6 628.2v7l5.4 1.2 5.4-1.2v-7l-5.4 1.4z" fill="#fff" stroke="#6c7c92" stroke-width="1" stroke-linejoin="round"/><path d="M280 629.4v7" stroke="#6c7c92" stroke-width="0.9"/><rect x="273.8" y="625.4" width="5.4" height="5" fill="#e0e0e0"/><path d="M275.65 625.70h1.70v1.45h1.45v1.70h-1.45v1.45h-1.70v-1.45h-1.45v-1.70h1.45z" fill="#3a69c2"/>
<path d="M11.3 72.6v7.6a4.5 1.7 0 0 0 9 0v-7.6" fill="#fbfbfb" stroke="#7a8696" stroke-width="0.95"/><ellipse cx="15.8" cy="72.5" rx="4.5" ry="1.8" fill="#fbfbfb" stroke="#7a8696" stroke-width="0.95"/><circle cx="20.3" cy="78.6" r="3.6" fill="#3b78d8" stroke="#f3f3f3" stroke-width="0.7"/><path d="M18.6 78.7l1.3 1.3 2.2-2.5" stroke="#fff" stroke-width="1" fill="none"/>
<g fill="#c9c9c9"><rect x="124.8" y="92.6" width="9.8" height="8.6"/></g><path d="M128 92.6v8.6M131.3 92.6v8.6" stroke="#f0f0f0" stroke-width="0.7"/><rect x="124.8" y="92.6" width="9.8" height="1.6" fill="#b9b9b9"/>
<circle cx="143" cy="95.8" r="2.5" fill="none" stroke="#6d7785" stroke-width="1.1"/><path d="M141.3 97.8l-2.4 2.6" stroke="#6d7785" stroke-width="1.3" fill="none"/>
<path d="M152 95.6h5.8l-2.9 3.2z" fill="#6d7785"/>
<path d="M153.1 54.9l1.6-2.3 1.6 2.3zM153.1 56.1l1.6 2.3 1.6-2.3z" fill="#5d6b7d"/><rect x="153.4" y="54.6" width="2.6" height="1.8" fill="#7d8896"/>
</svg>
<div class="a" style="left:922px;top:9px;width:135px;height:325px;background:#fff;border:1px solid #8e8e8e;border-radius:5px 5px 0 0;box-shadow:0 4px 11px rgba(0,0,0,.3),0 1px 3px rgba(0,0,0,.22);overflow:hidden">
<div class="a" style="left:-923px;top:-10px;width:1162px;height:653px">
<div class="a" style="left:923.00px;top:10.00px;width:133.00px;height:17.60px;background:#dde8f3;border-bottom:1px solid #bcc8d5"></div>
<div class="t ui" style="left:976.20px;top:14px;font-size:11.1px;color:#111;">Show Me</div>
<svg class="a" style="left:930.3px;top:33.0px;overflow:hidden" width="33.5" height="22.4" viewBox="0 0 34 22" preserveAspectRatio="none"><rect x="0.5" y="0.5" width="33" height="21" fill="#f0f0f0" stroke="#e0e0e0" stroke-width="1"/><rect x="1" y="8.3" width="32" height="6.9" fill="#fafafa"/><g opacity="0.99"><rect x="2" y="3.4" width="2.0" height="0.9" fill="#8e8e8e"/><text x="8.7" y="5.7" font-size="5.6" font-weight="bold" fill="#8a8a8a" font-family="Liberation Sans,sans-serif" textLength="9.2" lengthAdjust="spacing">123</text><text x="21.8" y="5.7" font-size="5.6" font-weight="bold" fill="#8a8a8a" font-family="Liberation Sans,sans-serif" textLength="9.2" lengthAdjust="spacing">123</text><rect x="2" y="10.4" width="3.6" height="0.9" fill="#8e8e8e"/><text x="8.7" y="12.7" font-size="5.6" font-weight="bold" fill="#8a8a8a" font-family="Liberation Sans,sans-serif" textLength="9.2" lengthAdjust="spacing">123</text><text x="21.8" y="12.7" font-size="5.6" font-weight="bold" fill="#8a8a8a" font-family="Liberation Sans,sans-serif" textLength="9.2" lengthAdjust="spacing">123</text><rect x="2" y="17.2" width="2.0" height="0.9" fill="#8e8e8e"/><text x="8.7" y="19.5" font-size="5.6" font-weight="bold" fill="#8a8a8a" font-family="Liberation Sans,sans-serif" textLength="9.2" lengthAdjust="spacing">123</text><text x="21.8" y="19.5" font-size="5.6" font-weight="bold" fill="#8a8a8a" font-family="Liberation Sans,sans-serif" textLength="9.2" lengthAdjust="spacing">123</text></g></svg>
<svg class="a" style="left:973.1px;top:33.0px;overflow:hidden" width="33.5" height="22.4" viewBox="0 0 34 22" preserveAspectRatio="none"><rect x="0.5" y="0.5" width="33" height="21" fill="#fff" stroke="#e0e0e0" stroke-width="1"/><rect x="8.0" y="2.3" width="4.4" height="4.4" fill="#a9b9aa"/><rect x="14.2" y="2.3" width="4.0" height="4.0" fill="#c3a8b0"/><rect x="20.8" y="2.8" width="3.6" height="3.6" fill="#c3cdc0"/><rect x="27.4" y="3.4" width="2.2" height="2.2" fill="#c3cdc0"/><rect x="8.3" y="8.2" width="3.8" height="3.8" fill="#c3cdc0"/><rect x="15.2" y="9.3" width="1.8" height="1.8" fill="#c3cdc0"/><rect x="20.4" y="7.8" width="4.4" height="4.4" fill="#a9b9aa"/><rect x="26.4" y="7.8" width="4.4" height="4.4" fill="#b5c3b5"/><rect x="7.6" y="13.6" width="5.6" height="5.6" fill="#b5c3b5"/><rect x="14.4" y="14.4" width="4.0" height="4.0" fill="#a9b9aa"/><rect x="19.8" y="13.4" width="6.2" height="6.2" fill="#b5c3b5"/><rect x="26.8" y="14.4" width="4.0" height="4.0" fill="#a9b9aa"/><rect x="1.8" y="4.3" width="1.8" height="0.7" fill="#b0b0b0"/><rect x="1.8" y="10.1" width="3.0" height="0.7" fill="#b0b0b0"/><rect x="1.8" y="16.2" width="1.8" height="0.7" fill="#b0b0b0"/></svg>
<svg class="a" style="left:1015.1px;top:33.0px;overflow:hidden" width="33.5" height="22.4" viewBox="0 0 34 22" preserveAspectRatio="none"><rect x="0.5" y="0.5" width="33" height="21" fill="#fff" stroke="#e0e0e0" stroke-width="1"/><g opacity="0.99"><rect x="7.3" y="0.8" width="12.6" height="6.5" fill="#eef2ee" stroke="#e0e0e0" stroke-width="0.6"/><text x="18.9" y="5.7" font-size="4.2" fill="#9a9a9a" text-anchor="end" letter-spacing="0.5" font-family="Liberation Sans,sans-serif">172</text><rect x="20.5" y="0.8" width="12.6" height="6.5" fill="#eef2ee" stroke="#e0e0e0" stroke-width="0.6"/><text x="32.1" y="5.7" font-size="4.2" fill="#9a9a9a" text-anchor="end" letter-spacing="0.5" font-family="Liberation Sans,sans-serif">1233</text><rect x="7.3" y="7.8" width="12.6" height="6.5" fill="#fbeef0" stroke="#e0e0e0" stroke-width="0.6"/><text x="18.9" y="12.7" font-size="4.2" fill="#9a9a9a" text-anchor="end" letter-spacing="0.5" font-family="Liberation Sans,sans-serif">3418</text><rect x="20.5" y="7.8" width="12.6" height="6.5" fill="#eef2ee" stroke="#e0e0e0" stroke-width="0.6"/><text x="32.1" y="12.7" font-size="4.2" fill="#9a9a9a" text-anchor="end" letter-spacing="0.5" font-family="Liberation Sans,sans-serif">5700</text><rect x="7.3" y="14.8" width="12.6" height="6.5" fill="#f6f6f6" stroke="#e0e0e0" stroke-width="0.6"/><text x="18.9" y="19.7" font-size="4.2" fill="#9a9a9a" text-anchor="end" letter-spacing="0.5" font-family="Liberation Sans,sans-serif">1282</text><rect x="20.5" y="14.8" width="12.6" height="6.5" fill="#f6f6f6" stroke="#e0e0e0" stroke-width="0.6"/><text x="32.1" y="19.7" font-size="4.2" fill="#9a9a9a" text-anchor="end" letter-spacing="0.5" font-family="Liberation Sans,sans-serif">1243</text><rect x="1.8" y="4.3" width="1.8" height="0.7" fill="#b4b4b4"/><rect x="1.8" y="10.9" width="3.4" height="0.7" fill="#b4b4b4"/><rect x="1.8" y="18.0" width="1.8" height="0.7" fill="#b4b4b4"/></g></svg>
<svg class="a" style="left:930.3px;top:60.2px;overflow:hidden" width="33.5" height="22.4" viewBox="0 0 34 22" preserveAspectRatio="none"><rect x="0.5" y="0.5" width="33" height="21" fill="#fff" stroke="#e0e0e0" stroke-width="1"/><path d="M2.5 4.2l3-1.4 4.2-0.4 3.4 0.6-1.2 1.8-2 0.6-0.4 2.2-2 1.6-1.2 1.6-1.4-1-1-2.6-1.6-1.4z" fill="#e0e0e0"/><path d="M13 1.6l2.8-0.4 0.6 1.4-2 1.2z" fill="#e0e0e0"/><path d="M7.2 10.8l2.6-0.4 2.2 1.8-0.6 2.8-1.6 1.6-0.6 3-1.2-0.6-0.4-3.6-1.2-2.2z" fill="#e0e0e0"/><path d="M15.8 3.4l2.4-1 2.6 0.2 0.2 2-2 1-2.6 0.6-0.8-1.4z" fill="#e0e0e0"/><path d="M14.2 7.6l3.6-0.8 2.8 0.6 1.4 2.8-1.4 1-1 3.4-1.6 2-1.4-0.2-0.6-3.8-2-2.4z" fill="#e0e0e0"/><path d="M21 2.4l5.6-0.8 4.6 1.2-0.6 2.6-2 1.2-0.8 2.6-1.8 0.6-1-2-2 0.6-1.6-1.2-1-1.8z" fill="#e0e0e0"/><path d="M25.6 11.6l1.6 0.4 0.4 1.6-1.2 0.2z" fill="#e0e0e0"/><path d="M27 14.8l2.6-0.8 1.8 1.4-0.4 2-2.4 0.4-1.8-1.2z" fill="#e0e0e0"/><path d="M31.6 18.8l1 0.6-0.6 0.8z" fill="#e0e0e0"/><circle cx="4.0" cy="6.4" r="1.2" fill="#8ea5bb" fill-opacity="0.85"/><circle cx="9.0" cy="2.8" r="0.8" fill="#8ea5bb" fill-opacity="0.85"/><circle cx="12.0" cy="4.2" r="0.7" fill="#8ea5bb" fill-opacity="0.85"/><circle cx="8.2" cy="12.6" r="1.5" fill="#8ea5bb" fill-opacity="0.85"/><circle cx="20.6" cy="7.6" r="1.1" fill="#8ea5bb" fill-opacity="0.85"/><circle cx="25.4" cy="8.0" r="0.9" fill="#8ea5bb" fill-opacity="0.85"/><circle cx="25.0" cy="5.0" r="0.7" fill="#8ea5bb" fill-opacity="0.85"/><circle cx="25.2" cy="12.8" r="1.1" fill="#8ea5bb" fill-opacity="0.85"/></svg>
<svg class="a" style="left:973.1px;top:60.2px;overflow:hidden" width="33.5" height="22.4" viewBox="0 0 34 22" preserveAspectRatio="none"><rect x="0.5" y="0.5" width="33" height="21" fill="#fff" stroke="#e0e0e0" stroke-width="1"/><path d="M2.5 4.2l3-1.4 4.2-0.4 3.4 0.6-1.2 1.8-2 0.6-0.4 2.2-2 1.6-1.2 1.6-1.4-1-1-2.6-1.6-1.4z" fill="#e2e2e2"/><path d="M13 1.6l2.8-0.4 0.6 1.4-2 1.2z" fill="#e2e2e2"/><path d="M7.2 10.8l2.6-0.4 2.2 1.8-0.6 2.8-1.6 1.6-0.6 3-1.2-0.6-0.4-3.6-1.2-2.2z" fill="#a2b4a5"/><path d="M15.8 3.4l2.4-1 2.6 0.2 0.2 2-2 1-2.6 0.6-0.8-1.4z" fill="#9aad9d"/><path d="M14.2 7.6l3.6-0.8 2.8 0.6 1.4 2.8-1.4 1-1 3.4-1.6 2-1.4-0.2-0.6-3.8-2-2.4z" fill="#a2b4a5"/><path d="M21 2.4l5.6-0.8 4.6 1.2-0.6 2.6-2 1.2-0.8 2.6-1.8 0.6-1-2-2 0.6-1.6-1.2-1-1.8z" fill="#e2e2e2"/><path d="M25.6 11.6l1.6 0.4 0.4 1.6-1.2 0.2z" fill="#e2e2e2"/><path d="M27 14.8l2.6-0.8 1.8 1.4-0.4 2-2.4 0.4-1.8-1.2z" fill="#9aad9d"/><path d="M31.6 18.8l1 0.6-0.6 0.8z" fill="#9aad9d"/></svg>
<svg class="a" style="left:1015.1px;top:60.2px;overflow:hidden" width="33.5" height="22.4" viewBox="0 0 34 22" preserveAspectRatio="none"><rect x="0.5" y="0.5" width="33" height="21" fill="#fff" stroke="#e0e0e0" stroke-width="1"/><path d="M17.00 11.00L17.00 3.00A8 8 0 0 1 24.06 7.24z" fill="#c9d0d8"/><path d="M17.00 11.00L24.06 7.24A8 8 0 0 1 22.14 17.13z" fill="#e9dacb"/><path d="M17.00 11.00L22.14 17.13A8 8 0 0 1 9.03 10.30z" fill="#c3d1c4"/><path d="M17.00 11.00L9.03 10.30A8 8 0 0 1 17.00 3.00z" fill="#dfcbcb"/></svg>
<svg class="a" style="left:930.3px;top:87.5px;overflow:hidden" width="33.5" height="22.4" viewBox="0 0 34 22" preserveAspectRatio="none"><rect x="0.5" y="0.5" width="33" height="21" fill="#fff" stroke="#e0e0e0" stroke-width="1"/><rect x="1" y="3.3" width="9.0" height="2.1" fill="#9aa9b6"/><rect x="1" y="8.1" width="29.0" height="2.1" fill="#9aa9b6"/><rect x="1" y="12.9" width="5.0" height="2.1" fill="#9aa9b6"/><rect x="1" y="17.7" width="21.0" height="2.1" fill="#9aa9b6"/></svg>
<svg class="a" style="left:973.1px;top:87.5px;overflow:hidden" width="33.5" height="22.4" viewBox="0 0 34 22" preserveAspectRatio="none"><rect x="0.5" y="0.5" width="33" height="21" fill="#fff" stroke="#e0e0e0" stroke-width="1"/><rect x="3.7" y="2.7" width="3.9" height="6.9" fill="#9aa9b6"/><rect x="3.7" y="9.6" width="3.9" height="11.6" fill="#dcc9ba"/><rect x="10.8" y="8.5" width="3.9" height="5.1" fill="#9aa9b6"/><rect x="10.8" y="13.6" width="3.9" height="7.6" fill="#dcc9ba"/><rect x="17.9" y="3.6" width="3.9" height="14.0" fill="#9aa9b6"/><rect x="17.9" y="17.6" width="3.9" height="3.6" fill="#dcc9ba"/><rect x="25.0" y="13.0" width="3.9" height="3.2" fill="#9aa9b6"/><rect x="25.0" y="16.2" width="3.9" height="5.0" fill="#dcc9ba"/></svg>
<svg class="a" style="left:1015.1px;top:87.5px;overflow:hidden" width="33.5" height="22.4" viewBox="0 0 34 22" preserveAspectRatio="none"><rect x="0.5" y="0.5" width="33" height="21" fill="#fff" stroke="#e0e0e0" stroke-width="1"/><path d="M11.3 0.5v21M22.6 0.5v21" stroke="#e6e6e6" stroke-width="0.9"/><rect x="3.2" y="5.6" width="3" height="15.6" fill="#9aa9b6"/><rect x="6.4" y="13.6" width="3" height="7.6" fill="#dcc9ba"/><rect x="13.8" y="16.0" width="3" height="5.2" fill="#9aa9b6"/><rect x="17.0" y="2.6" width="3" height="18.6" fill="#dcc9ba"/><rect x="24.0" y="13.6" width="3" height="7.6" fill="#9aa9b6"/><rect x="27.4" y="9.6" width="3" height="11.6" fill="#dcc9ba"/></svg>
<svg class="a" style="left:930.3px;top:114.8px;overflow:visible" width="33.5" height="22.4" viewBox="0 0 34 22" preserveAspectRatio="none"><rect x="-0.4" y="-0.6" width="34.4" height="23.4" rx="1.8" fill="#fff" stroke="#4a9ff8" stroke-width="1.7"/><rect x="3.0" y="3.4" width="13.5" height="7.4" fill="#a3d9a1"/><rect x="3.0" y="12.3" width="13.5" height="7.6" fill="#70c271"/><rect x="17.7" y="3.4" width="6.2" height="6.0" fill="#2a9142"/><rect x="25.2" y="3.4" width="5.8" height="6.0" fill="#a3d9a1"/><rect x="17.7" y="10.6" width="4.0" height="4.9" fill="#ffab61"/><rect x="22.8" y="10.8" width="3.0" height="4.4" fill="#79c679"/><rect x="27.6" y="10.6" width="3.4" height="4.6" fill="#2f9a45"/><rect x="17.7" y="16.6" width="3.6" height="3.2" fill="#2a9142"/><rect x="22.6" y="16.6" width="3.4" height="3.2" fill="#2a9142"/><rect x="27.6" y="16.4" width="3.4" height="1.2" fill="#2a9142"/><rect x="27.6" y="18.6" width="3.4" height="1.2" fill="#4bb05a"/></svg>
<svg class="a" style="left:973.1px;top:114.8px;overflow:hidden" width="33.5" height="22.4" viewBox="0 0 34 22" preserveAspectRatio="none"><rect x="0.5" y="0.5" width="33" height="21" fill="#fff" stroke="#e0e0e0" stroke-width="1"/><circle cx="6.6" cy="4.6" r="2.9" fill="none" stroke="#aab7c6" stroke-width="0.7"/><circle cx="6.6" cy="8.8" r="2.9" fill="none" stroke="#b2c0b3" stroke-width="0.7"/><circle cx="6.6" cy="13.6" r="2.9" fill="none" stroke="#dcc6b8" stroke-width="0.7"/><circle cx="16.4" cy="7.0" r="2.9" fill="none" stroke="#dcc6b8" stroke-width="0.7"/><circle cx="16.4" cy="15.4" r="2.9" fill="none" stroke="#b2c0b3" stroke-width="0.7"/><circle cx="16.4" cy="20.6" r="2.9" fill="none" stroke="#aab7c6" stroke-width="0.7"/><circle cx="26.0" cy="6.6" r="2.9" fill="none" stroke="#b2c0b3" stroke-width="0.7"/><circle cx="26.0" cy="10.6" r="2.9" fill="none" stroke="#aab7c6" stroke-width="0.7"/><circle cx="26.0" cy="19.0" r="2.9" fill="none" stroke="#dcc6b8" stroke-width="0.7"/></svg>
<svg class="a" style="left:1015.1px;top:114.8px;overflow:hidden" width="33.5" height="22.4" viewBox="0 0 34 22" preserveAspectRatio="none"><rect x="0.5" y="0.5" width="33" height="21" fill="#fff" stroke="#e0e0e0" stroke-width="1"/><path d="M17 0.5v21" stroke="#e6e6e6" stroke-width="0.9"/><circle cx="5.0" cy="7.2" r="2.4" fill="none" stroke="#aab7c6" stroke-width="0.7"/><circle cx="5.0" cy="9.8" r="2.4" fill="none" stroke="#aab7c6" stroke-width="0.7"/><circle cx="5.0" cy="17.0" r="2.4" fill="none" stroke="#aab7c6" stroke-width="0.7"/><circle cx="12.4" cy="4.0" r="2.6" fill="none" stroke="#dcc6b8" stroke-width="0.7"/><circle cx="12.4" cy="10.0" r="2.6" fill="none" stroke="#dcc6b8" stroke-width="0.7"/><circle cx="12.4" cy="12.4" r="2.6" fill="none" stroke="#dcc6b8" stroke-width="0.7"/><circle cx="21.4" cy="5.0" r="2.6" fill="none" stroke="#aab7c6" stroke-width="0.7"/><circle cx="21.4" cy="14.4" r="2.6" fill="none" stroke="#aab7c6" stroke-width="0.7"/><circle cx="21.4" cy="17.4" r="2.6" fill="none" stroke="#aab7c6" stroke-width="0.7"/><circle cx="28.6" cy="6.6" r="2.6" fill="none" stroke="#dcc6b8" stroke-width="0.7"/><circle cx="28.6" cy="9.4" r="2.6" fill="none" stroke="#dcc6b8" stroke-width="0.7"/><circle cx="28.6" cy="17.0" r="2.6" fill="none" stroke="#dcc6b8" stroke-width="0.7"/></svg>
<svg class="a" style="left:930.3px;top:142.1px;overflow:hidden" width="33.5" height="22.4" viewBox="0 0 34 22" preserveAspectRatio="none"><rect x="0.5" y="0.5" width="33" height="21" fill="#fff" stroke="#a9a9a9" stroke-width="1"/><polyline points="0.8,6.6 4.6,3.0 13.6,13.0 19.0,7.0 25.0,13.0 33.0,4.4" fill="none" stroke="#2878b8" stroke-width="1.3" stroke-linejoin="miter"/><polyline points="0.8,9.4 5.0,14.6 13.6,4.4 26.0,16.6 33.0,12.4" fill="none" stroke="#ff8a22" stroke-width="1.3" stroke-linejoin="miter"/><polyline points="0.8,15.0 5.0,20.0 17.0,14.4 26.0,20.4 33.0,17.0" fill="none" stroke="#2aa84a" stroke-width="1.3" stroke-linejoin="miter"/></svg>
<svg class="a" style="left:973.1px;top:142.1px;overflow:hidden" width="33.5" height="22.4" viewBox="0 0 34 22" preserveAspectRatio="none"><rect x="0.5" y="0.5" width="33" height="21" fill="#fff" stroke="#e0e0e0" stroke-width="1"/><path d="M16.2 0.5v21" stroke="#e2e2e2" stroke-width="0.9"/><polyline points="1.4,7.0 5.6,4.0 9.0,7.4 11.4,10.6 13.6,10.8" fill="none" stroke="#9aa9b6" stroke-width="0.9" stroke-linejoin="miter"/><polyline points="1.4,10.4 6.0,8.0 10.6,6.2 12.0,8.2 13.6,11.6" fill="none" stroke="#dcc9ba" stroke-width="0.9" stroke-linejoin="miter"/><polyline points="1.4,15.6 5.4,12.6 9.6,17.2 12.4,15.6 13.6,17.4" fill="none" stroke="#a9b9aa" stroke-width="0.9" stroke-linejoin="miter"/><polyline points="18.4,5.6 21.0,8.0 25.6,3.0 29.0,5.6 31.4,5.0" fill="none" stroke="#9aa9b6" stroke-width="0.9" stroke-linejoin="miter"/><polyline points="18.4,16.2 23.4,11.0 26.0,10.4 31.6,3.4" fill="none" stroke="#dcc9ba" stroke-width="0.9" stroke-linejoin="miter"/><polyline points="18.4,19.4 24.0,14.4 27.0,16.4 31.6,8.0" fill="none" stroke="#a9b9aa" stroke-width="0.9" stroke-linejoin="miter"/></svg>
<svg class="a" style="left:1015.1px;top:142.1px;overflow:hidden" width="33.5" height="22.4" viewBox="0 0 34 22" preserveAspectRatio="none"><rect x="0.5" y="0.5" width="33" height="21" fill="#fff" stroke="#e0e0e0" stroke-width="1"/><rect x="1" y="3.4" width="2" height="0.6" fill="#e6d2c2"/><rect x="1" y="5.8" width="2" height="0.6" fill="#e6d2c2"/><rect x="1" y="8.2" width="2" height="0.6" fill="#e6d2c2"/><rect x="1" y="10.6" width="2" height="0.6" fill="#e6d2c2"/><rect x="1" y="13.0" width="2" height="0.6" fill="#e6d2c2"/><rect x="1" y="15.4" width="2" height="0.6" fill="#e6d2c2"/><rect x="1" y="17.8" width="2" height="0.6" fill="#e6d2c2"/><rect x="31" y="3.4" width="2" height="0.6" fill="#b8c4d0"/><rect x="31" y="8.4" width="2" height="0.6" fill="#b8c4d0"/><rect x="31" y="13.4" width="2" height="0.6" fill="#b8c4d0"/><rect x="31" y="18.4" width="2" height="0.6" fill="#b8c4d0"/><polyline points="5.4,7.4 9.6,3.6 14.6,8.4 18.4,6.2 24.0,11.6 28.4,9.0" fill="none" stroke="#9aa9b6" stroke-width="0.9" stroke-linejoin="miter"/><polyline points="5.4,11.6 9.0,9.4 14.4,16.2 18.4,14.0 23.4,17.0 28.4,12.0" fill="none" stroke="#dcc9ba" stroke-width="0.9" stroke-linejoin="miter"/></svg>
<svg class="a" style="left:930.3px;top:169.1px;overflow:hidden" width="33.5" height="22.4" viewBox="0 0 34 22" preserveAspectRatio="none"><rect x="0.5" y="0.5" width="33" height="21" fill="#fff" stroke="#a9a9a9" stroke-width="1"/><polygon points="1.0,12.0 11.4,3.6 22.4,11.0 33.0,9.0 33.0,21.0 1.0,21.0" fill="#5b9fd1"/><polygon points="1.0,14.6 11.4,7.6 22.4,17.0 33.0,10.4 33.0,21.0 1.0,21.0" fill="#ffac63"/><polygon points="1.0,20.0 11.4,15.6 22.4,19.6 33.0,17.0 33.0,21.0 1.0,21.0" fill="#62c273"/></svg>
<svg class="a" style="left:973.1px;top:169.1px;overflow:hidden" width="33.5" height="22.4" viewBox="0 0 34 22" preserveAspectRatio="none"><rect x="0.5" y="0.5" width="33" height="21" fill="#fff" stroke="#e0e0e0" stroke-width="1"/><path d="M16.6 0.5v21" stroke="#e2e2e2" stroke-width="0.9"/><polygon points="1.6,6.0 4.6,3.0 10.0,15.0 14.0,6.4 15.2,9.0 15.2,20.6 1.6,20.6" fill="#b9c1cc"/><polygon points="1.6,14.0 5.0,9.4 10.0,17.6 14.0,11.0 15.2,12.0 15.2,20.6 1.6,20.6" fill="#e4d4c6"/><polygon points="1.6,17.6 5.0,15.0 10.0,20.0 14.0,17.0 15.2,17.4 15.2,20.6 1.6,20.6" fill="#cbd8cc"/><polygon points="18.2,5.6 26.0,12.4 31.6,9.4 31.6,20.6 18.2,20.6" fill="#b9c1cc"/><polygon points="18.2,8.4 26.0,14.6 31.6,11.6 31.6,20.6 18.2,20.6" fill="#e4d4c6"/><polygon points="18.2,11.0 26.0,16.4 31.6,14.0 31.6,20.6 18.2,20.6" fill="#cbd8cc"/></svg>
<svg class="a" style="left:1015.1px;top:169.1px;overflow:hidden" width="33.5" height="22.4" viewBox="0 0 34 22" preserveAspectRatio="none"><rect x="0.5" y="0.5" width="33" height="21" fill="#fff" stroke="#e0e0e0" stroke-width="1"/><rect x="1" y="3.4" width="2" height="0.6" fill="#e6d2c2"/><rect x="1" y="5.8" width="2" height="0.6" fill="#e6d2c2"/><rect x="1" y="8.2" width="2" height="0.6" fill="#e6d2c2"/><rect x="1" y="10.6" width="2" height="0.6" fill="#e6d2c2"/><rect x="1" y="13.0" width="2" height="0.6" fill="#e6d2c2"/><rect x="1" y="15.4" width="2" height="0.6" fill="#e6d2c2"/><rect x="1" y="17.8" width="2" height="0.6" fill="#e6d2c2"/><rect x="31" y="3.4" width="2" height="0.6" fill="#b8c4d0"/><rect x="31" y="8.4" width="2" height="0.6" fill="#b8c4d0"/><rect x="31" y="13.4" width="2" height="0.6" fill="#b8c4d0"/><rect x="31" y="18.4" width="2" height="0.6" fill="#b8c4d0"/><rect x="5.6" y="11.4" width="3" height="9.8" fill="#9aa9b6"/><rect x="10.6" y="8.0" width="3" height="13.2" fill="#9aa9b6"/><rect x="15.4" y="15.0" width="3" height="6.2" fill="#9aa9b6"/><rect x="20.4" y="2.6" width="3" height="18.6" fill="#9aa9b6"/><rect x="25.2" y="11.6" width="3" height="9.6" fill="#9aa9b6"/><polyline points="6.0,8.0 11.4,3.0 17.0,10.0 22.0,5.4 26.6,10.0" fill="none" stroke="#d3bba8" stroke-width="0.8" stroke-linejoin="miter"/></svg>
<svg class="a" style="left:930.3px;top:196.4px;overflow:hidden" width="33.5" height="22.4" viewBox="0 0 34 22" preserveAspectRatio="none"><rect x="0.5" y="0.5" width="33" height="21" fill="#fff" stroke="#e0e0e0" stroke-width="1"/><circle cx="3.6" cy="19.0" r="1.7" fill="none" stroke="#a9b6c5" stroke-width="0.8"/><circle cx="8.4" cy="13.0" r="1.7" fill="none" stroke="#a9b6c5" stroke-width="0.8"/><circle cx="13.0" cy="10.4" r="1.7" fill="none" stroke="#a9b6c5" stroke-width="0.8"/><circle cx="19.6" cy="8.6" r="1.7" fill="none" stroke="#a9b6c5" stroke-width="0.8"/><circle cx="25.0" cy="3.0" r="1.7" fill="none" stroke="#a9b6c5" stroke-width="0.8"/><circle cx="24.4" cy="10.8" r="1.7" fill="none" stroke="#a9b6c5" stroke-width="0.8"/><path d="M6.4 18.4h4M8.4 16.4v4" stroke="#dcc6b8" stroke-width="1"/><path d="M10.4 16.0h4M12.4 14.0v4" stroke="#dcc6b8" stroke-width="1"/><path d="M14.2 4.6h4M16.2 2.6v4" stroke="#dcc6b8" stroke-width="1"/><path d="M16.6 14.4h4M18.6 12.4v4" stroke="#dcc6b8" stroke-width="1"/><path d="M26.4 8.0h4M28.4 6.0v4" stroke="#dcc6b8" stroke-width="1"/></svg>
<svg class="a" style="left:973.1px;top:196.4px;overflow:hidden" width="33.5" height="22.4" viewBox="0 0 34 22" preserveAspectRatio="none"><rect x="0.5" y="0.5" width="33" height="21" fill="#fff" stroke="#e0e0e0" stroke-width="1"/><rect x="2.4" y="19.8" width="2.3" height="1.4" fill="#c4c4c4"/><rect x="5.6" y="17.0" width="2.3" height="4.2" fill="#c4c4c4"/><rect x="8.8" y="9.0" width="2.3" height="12.2" fill="#c4c4c4"/><rect x="12.0" y="4.4" width="2.3" height="16.8" fill="#c4c4c4"/><rect x="15.2" y="2.8" width="2.3" height="18.4" fill="#c4c4c4"/><rect x="18.4" y="4.4" width="2.3" height="16.8" fill="#c4c4c4"/><rect x="21.6" y="9.0" width="2.3" height="12.2" fill="#c4c4c4"/><rect x="24.8" y="17.0" width="2.3" height="4.2" fill="#c4c4c4"/><rect x="28.0" y="19.8" width="2.3" height="1.4" fill="#c4c4c4"/></svg>
<svg class="a" style="left:1015.1px;top:196.4px;overflow:hidden" width="33.5" height="22.4" viewBox="0 0 34 22" preserveAspectRatio="none"><rect x="0.5" y="0.5" width="33" height="21" fill="#fff" stroke="#a9a9a9" stroke-width="1"/><path d="M5.8 7.0V18.0" stroke="#3c84c8" stroke-width="0.8"/><path d="M4.6 7.0h2.4M4.6 18.0h2.4" stroke="#444" stroke-width="0.7"/><rect x="4.2" y="10.8" width="3.2" height="4.8" fill="#3f8ad0"/><rect x="4.2" y="12.6" width="3.2" height="2" fill="#0f57a8"/><path d="M13.4 6.4V19.0" stroke="#3c84c8" stroke-width="0.8"/><path d="M12.2 6.4h2.4M12.2 19.0h2.4" stroke="#444" stroke-width="0.7"/><rect x="11.8" y="11.0" width="3.2" height="5.8" fill="#3f8ad0"/><rect x="11.8" y="13.6" width="3.2" height="2" fill="#0f57a8"/><path d="M20.4 5.0V19.0" stroke="#3c84c8" stroke-width="0.8"/><path d="M19.2 5.0h2.4M19.2 19.0h2.4" stroke="#444" stroke-width="0.7"/><rect x="18.8" y="7.8" width="3.2" height="6.8" fill="#3f8ad0"/><rect x="18.8" y="11.4" width="3.2" height="2" fill="#0f57a8"/><path d="M27.8 3.6V19.0" stroke="#3c84c8" stroke-width="0.8"/><path d="M26.6 3.6h2.4M26.6 19.0h2.4" stroke="#444" stroke-width="0.7"/><rect x="26.2" y="5.8" width="3.2" height="7.8" fill="#3f8ad0"/><rect x="26.2" y="9.8" width="3.2" height="2" fill="#0f57a8"/></svg>
<svg class="a" style="left:930.3px;top:223.8px;overflow:hidden" width="33.5" height="22.4" viewBox="0 0 34 22" preserveAspectRatio="none"><rect x="0.5" y="0.5" width="33" height="21" fill="#fff" stroke="#a9a9a9" stroke-width="1"/><rect x="1.0" y="3.0" width="4.6" height="3.4" fill="#2b72ad"/><rect x="13.2" y="3.0" width="1.6" height="3.4" fill="#e77a8a"/><rect x="15.0" y="3.0" width="1.6" height="3.4" fill="#ff9a3c"/><rect x="20.0" y="3.0" width="1.0" height="3.4" fill="#2b72ad"/><rect x="23.4" y="3.0" width="4.4" height="3.4" fill="#f58b2b"/><rect x="1.0" y="9.4" width="2.6" height="3.6" fill="#f58b2b"/><rect x="4.4" y="9.4" width="1.2" height="3.6" fill="#2aa040"/><rect x="8.6" y="9.4" width="2.0" height="3.6" fill="#2b72ad"/><rect x="13.4" y="9.4" width="9.6" height="3.6" fill="#2b72ad"/><rect x="26.0" y="9.4" width="4.6" height="3.6" fill="#2aa040"/><rect x="2.6" y="15.8" width="4.4" height="3.6" fill="#f58b2b"/><rect x="7.6" y="15.8" width="1.0" height="3.6" fill="#5ab868"/><rect x="9.4" y="15.8" width="1.6" height="3.6" fill="#d83a48"/><rect x="17.0" y="15.8" width="2.6" height="3.6" fill="#2b72ad"/><rect x="24.8" y="15.8" width="2.2" height="3.6" fill="#cc2c3c"/></svg>
<svg class="a" style="left:973.1px;top:223.8px;overflow:hidden" width="33.5" height="22.4" viewBox="0 0 34 22" preserveAspectRatio="none"><rect x="0.5" y="0.5" width="33" height="21" fill="#fff" stroke="#e0e0e0" stroke-width="1"/><rect x="0.8" y="2.6" width="32" height="3.2" fill="#f1f3f5"/><rect x="0.8" y="2.6" width="24.6" height="3.2" fill="#e6e9ec"/><rect x="0.8" y="3.1" width="14.6" height="2.2" fill="#9aa9b6"/><rect x="18.0" y="2.4" width="1" height="3.6" fill="#8a8a8a"/><rect x="0.8" y="9.0" width="32" height="3.2" fill="#f1f3f5"/><rect x="0.8" y="9.0" width="24.6" height="3.2" fill="#e6e9ec"/><rect x="0.8" y="9.5" width="24.0" height="2.2" fill="#9aa9b6"/><rect x="23.0" y="8.8" width="1" height="3.6" fill="#8a8a8a"/><rect x="0.8" y="15.4" width="32" height="3.2" fill="#f1f3f5"/><rect x="0.8" y="15.4" width="24.6" height="3.2" fill="#e6e9ec"/><rect x="0.8" y="15.9" width="15.6" height="2.2" fill="#9aa9b6"/><rect x="27.6" y="15.2" width="1" height="3.6" fill="#8a8a8a"/></svg>
<svg class="a" style="left:1015.1px;top:223.8px;overflow:hidden" width="33.5" height="22.4" viewBox="0 0 34 22" preserveAspectRatio="none"><rect x="0.5" y="0.5" width="33" height="21" fill="#fff" stroke="#a9a9a9" stroke-width="1"/><circle cx="9.4" cy="9.6" r="6.4" fill="#619ccb"/><circle cx="20.2" cy="5.6" r="3.5" fill="#e86572"/><circle cx="27.2" cy="10.8" r="3.5" fill="#66bd6f"/><circle cx="19.8" cy="13.6" r="3.1" fill="#ffa556"/><circle cx="14.6" cy="17.8" r="2.0" fill="#5cb864"/></svg>
<svg class="a" style="left:0;top:0;overflow:visible" width="1162" height="40" viewBox="0 0 1162 40"><rect x="958.40" y="16.80" width="2.10" height="6.40" fill="#cf8a08"/><rect x="961.50" y="14.60" width="2.40" height="8.60" fill="#b8240a"/><rect x="964.90" y="16.20" width="2.40" height="7.00" fill="#1fbf2a"/><rect x="968.30" y="18.40" width="2.00" height="4.80" fill="#2a12f5"/><path d="M957.60 23.50h13.4" stroke="#6a7f9c" stroke-width="0.7" fill="none"/><path d="M1044.60 16.10l5.4 5.4M1050.00 16.10l-5.4 5.4" stroke="#3c3c3c" stroke-width="1" fill="none"/></svg>
<div class="t ui s" style="left:928.20px;top:253px;font-size:9.2px;color:#111;letter-spacing:-0.05px">For <b style="letter-spacing:-0.3px">treemaps</b> try</div>
<div class="t ui s" style="left:933.40px;top:266px;font-size:9.2px;color:#111;letter-spacing:-0.3px">1 or more <span style="background:#d6e6f9">dimensions</span></div>
<div class="t ui s" style="left:933.40px;top:279px;font-size:9.2px;color:#111;letter-spacing:-0.3px">1 or 2 <span style="background:#c5edd6">measures</span></div>
</div></div>
</div></div>
</body></html>
